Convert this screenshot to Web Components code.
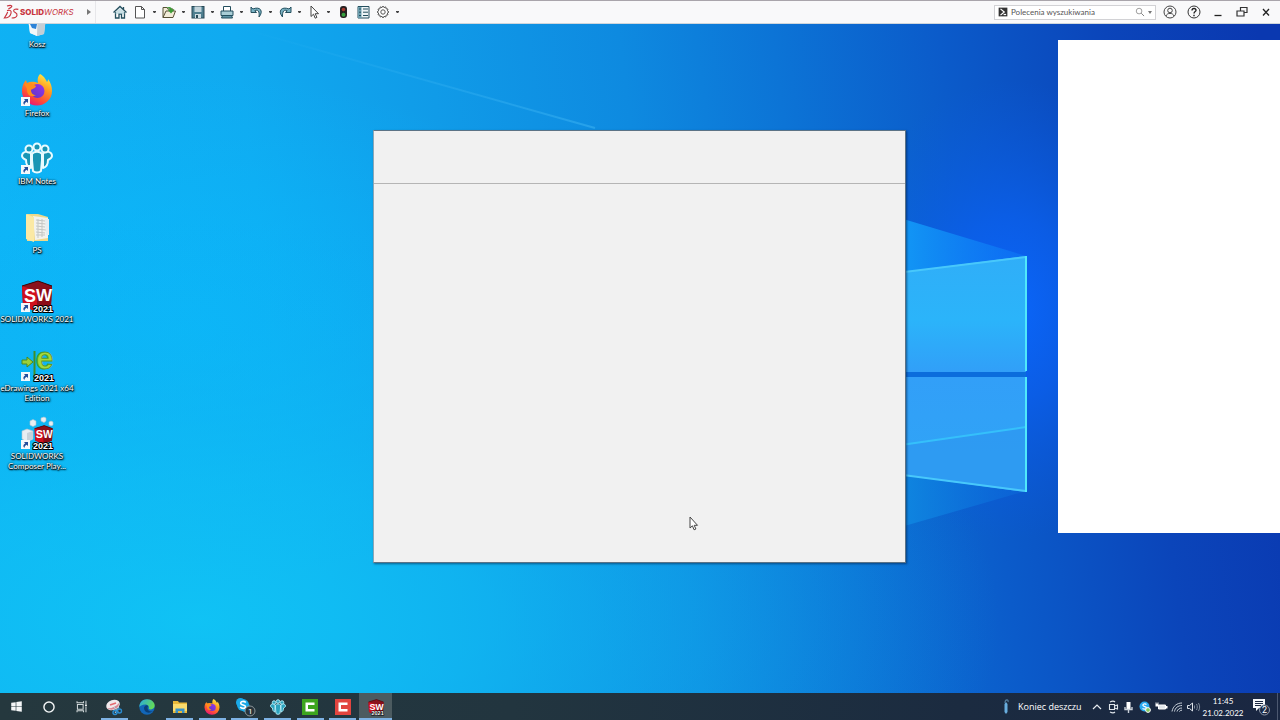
<!DOCTYPE html>
<html lang="pl">
<head>
<meta charset="utf-8">
<title>SOLIDWORKS</title>
<style>
  html, body { margin: 0; height: 100%; }
  body { font-family: "Open Sans", "Noto Sans", sans-serif; font-size: 9px; color: #222; overflow: hidden; }
</style>
</head>
<body>
<sw-screen>
  <sw-titlebar slot="top">
    <sw-tool icon="home" label="Strona główna"></sw-tool>
    <sw-tool icon="new" label="Nowy" menu></sw-tool>
    <sw-tool icon="open" label="Otwórz" menu></sw-tool>
    <sw-tool icon="save" label="Zapisz" menu></sw-tool>
    <sw-tool icon="print" label="Drukuj" menu></sw-tool>
    <sw-tool icon="undo" label="Cofnij" menu></sw-tool>
    <sw-tool icon="redo" label="Ponów" menu></sw-tool>
    <sw-tool icon="select" label="Wybierz" menu></sw-tool>
    <sw-tool icon="rebuild" label="Przebuduj"></sw-tool>
    <sw-tool icon="props" label="Właściwości"></sw-tool>
    <sw-tool icon="gear" label="Opcje" menu></sw-tool>
  </sw-titlebar>

  <desk-icon icon="bin">Kosz</desk-icon>
  <desk-icon icon="firefox" shortcut>Firefox</desk-icon>
  <desk-icon icon="notes" shortcut>IBM Notes</desk-icon>
  <desk-icon icon="folder">PS</desk-icon>
  <desk-icon icon="sw" shortcut>SOLIDWORKS 2021</desk-icon>
  <desk-icon icon="edrawings" shortcut>eDrawings 2021 x64 Edition</desk-icon>
  <desk-icon icon="composer" shortcut>SOLIDWORKS Composer Play...</desk-icon>

  <sw-dialog slot="windows"></sw-dialog>
  <sw-pane slot="windows"></sw-pane>

  <win-taskbar slot="bottom">
    <task-button icon="windows" label="Start"></task-button>
    <task-button icon="cortana" label="Cortana"></task-button>
    <task-button icon="taskview" label="Widok zadań"></task-button>
    <task-button icon="snip" label="Wycinanie" running></task-button>
    <task-button icon="edge" label="Edge"></task-button>
    <task-button icon="explorer" label="Eksplorator" running></task-button>
    <task-button icon="firefox" label="Firefox" running></task-button>
    <task-button icon="skype" label="Skype" running></task-button>
    <task-button icon="notesmall" label="IBM Notes" running></task-button>
    <task-button icon="camgreen" label="Camtasia" running></task-button>
    <task-button icon="camred" label="Rejestrator" running></task-button>
    <task-button icon="swsmall" label="SOLIDWORKS" running active></task-button>
  </win-taskbar>
</sw-screen>

<script>
const tealFill = '#a9cdd6', teal = '#244f5e';
const swCube = `
  <path d="M1 6 17 1l14 5-1 20-14 6L2 26z" fill="#8d0c18"/>
  <path d="M1 6 17 1l14 5-15 5z" fill="#8a121c"/>
  <path d="M1 6l15 5v21L2 26z" fill="#d0101d"/><path d="M16 11l15-5-1 20-14 6z" fill="#8c0c18"/>
  <path d="M1 6 17 1l14 5" fill="none" stroke="#3b0508" stroke-width="1"/>
  <text x="3" y="22" font-family="Liberation Sans" font-weight="700" font-size="18" fill="#fff">S</text>
  <text x="15" y="21" font-family="Liberation Sans" font-weight="700" font-size="17" fill="#fff">W</text>`;
const year = (x, y, s) => `<text x="${x}" y="${y}" font-family="Liberation Sans" font-weight="700" font-size="${s}" fill="#fff" stroke="#000" stroke-width="2" paint-order="stroke" stroke-linejoin="round">2021</text>`;
const people = (line, fill) => `
  <g fill="${fill}" stroke="${line}" stroke-width="2" stroke-linejoin="round">
  <path d="M1 14c0-5 8-6 9-2v14c-4-1-5-4-5-8-2-1-4-2-4-4zM31 14c0-5-8-6-9-2v14c4-1 5-4 5-8 2-1 4-2 4-4z"/>
  <path d="M11 12c2-3 8-3 10 0v6l-1 11c-2 2-6 2-8 0l-1-11z"/>
  <circle cx="8" cy="7" r="3.500"/><circle cx="24" cy="7" r="3.500"/><circle cx="16" cy="5" r="3.500"/></g>`;

const ICONS = {
  home: [16, `<path d="M1.500 8.500 8 2.500l6.500 6M3.500 8v6h3.500v-4h2.500v4h3V8M11.500 3v2.500" fill="none" stroke="${teal}" stroke-width="1.300"/><path d="M3.500 8 8 4l4.500 4v2h-9z" fill="${tealFill}" opacity=".6"/>`],
  new: [16, `<path d="M3.500 2.500h6l3 3v8.500h-9zM9.500 2.500v3h3" fill="#fff" stroke="#555" />`],
  open: [16, `<path d="M2 13.500V3.500h4l1 1.500h5v2M2 13.500l3-6.500h9.500l-2.500 6.500z" fill="#f2ecd8" stroke="#554f35"/><path d="M5 4c3-2 6-1 6 1.500h2.500L10 9.500 6.500 5.500H9C8.500 4 7 3.800 5 4z" fill="#3c9b35"/>`],
  save: [16, `<rect x="2" y="2.500" width="12" height="11.500" fill="#4f7f90" stroke="#284956"/><path d="M4.500 2.500h7V8h-7z" fill="#c3d5dc"/><path d="M5 10h6v4H5z" fill="#cfdde2"/><path d="M6 11h2v3H6z" fill="#284956"/>`],
  print: [16, `<path d="M4.500 7V2.500h7V7" fill="#fff" stroke="${teal}"/><path d="M2 7h12v4.500H2z" fill="${tealFill}" stroke="${teal}"/><path d="M3.500 11.500h9l1 2.500h-11z" fill="#5f95a6" stroke="${teal}"/>`],
  undo: [16, `<path d="M3 3v5.500h5.500L6.800 6.700c3-1.500 5 .3 4.200 6.300 5-6 1-11-6.200-8z" fill="#7ab3c4" stroke="${teal}"/>`],
  redo: [16, `<path d="M14 3v5.500H8.500l1.700-1.800c-3-1.500-5 .3-4.700 6.300-5-6-1-11 6.500-8z" fill="#7ab3c4" stroke="${teal}"/>`],
  select: [16, `<path d="M5 2v10.500l2.500-2.300 1.700 4 1.700-.8-1.700-3.700h3.300z" fill="#fff" stroke="#444" stroke-width="1"/>`],
  rebuild: [16, `<rect x="5" y="2" width="7" height="12" rx="3" fill="#262222"/><circle cx="8.500" cy="5.500" r="1.800" fill="#a83a30"/><circle cx="8.500" cy="10.800" r="2" fill="#36a13f"/>`],
  props: [16, `<path d="M3 2.500h11v11.500H3z" fill="#eef4f6" stroke="${teal}"/><path d="M3 3h3.500v11H3z" fill="#6ea0b0"/><path d="M8 5h5M8 8.200h5M8 11.500h5M4 5h2M4 8.200h2M4 11.500h2" stroke="${teal}"/>`],
  gear: [16, `<path d="M8 2l1 1.600 1.800-.7.300 1.900 1.900.3-.7 1.800L14 8l-1.700 1 .7 1.800-1.900.3-.3 1.900-1.800-.7L8 14l-1-1.700-1.800.7-.3-1.900-1.900-.3.700-1.800L2 8l1.700-1.100L3 5.100l1.900-.3.300-1.900 1.800.7z" fill="#fff" stroke="#555" stroke-width="1"/><circle cx="8" cy="8" r="2.200" fill="#fff" stroke="#555"/>`],
  user: [16, `<g fill="none" stroke="#444"><circle cx="8" cy="8" r="6"/><circle cx="8" cy="6.500" r="2.300"/><path d="M4 12c1-3.500 7-3.500 8 0"/></g>`],
  help: [16, `<circle cx="8" cy="8" r="6" fill="none" stroke="#333"/><path d="M6 6.500c0-3 4.300-2.500 4 0C9.800 7.700 8 7.500 8 9.500M8 10.700v1.500" fill="none" stroke="#222" stroke-width="1.400"/>`],
  min: [16, `<path d="M4.500 11.500h7" stroke="#222" stroke-width="1.300"/>`],
  restore: [16, `<path d="M6.500 7V3.500h6.500v5h-3M3 7h7v5H3z" fill="none" stroke="#333" stroke-width="1.200"/>`],
  close: [16, `<path d="M5 5l6 6.500M11 5l-6 6.500" stroke="#222" stroke-width="1.300"/>`],
  term: [16, `<path d="M1 1h14v14H1z" fill="#333"/><path d="M4 3l6 5-6 5" fill="none" stroke="#fff" stroke-width="2"/><path d="M9 12h4" stroke="#fff" stroke-width="2"/>`],
  loupe: [16, `<circle cx="6.500" cy="6.500" r="4.500" fill="none" stroke="#666"/><path d="M10 10l4.500 4.500" stroke="#666" stroke-width="1.300"/>`],
  ds: [24, `<g fill="none" stroke="#c8343e" stroke-width="1.700"><path d="M6 3c5-1.500 8-1 7 1-1 1.500-3 2.500-5 3.500"/><path d="M6 10c5-1.500 7 0 6 4-1 4-5 7-10 7 2-3 4-6 5-9"/><path d="M23 8c-4-1-7 0-7 2 0 3 6 3 5 7-.6 3-4 4-8 4"/></g>`],

  bin: [32, `<path d="M6 6l20-2-3 25-7 2-7-3z" fill="#dfe6ea"/><path d="M6 6l11 3-1 22-7-3z" fill="#f4f7f9"/><path d="M17 9l9-5-3 25-7 2z" fill="#c4ced6"/><path d="M9 19l4-3 3 3-1 5-4-1z" fill="#2d83d8"/>`],
  firefox: [32, `<defs><linearGradient id="f1" x1=".8" y1="0" x2=".3" y2="1"><stop offset="0" stop-color="#fff04a"/><stop offset=".4" stop-color="#ff9a1f"/><stop offset=".75" stop-color="#ff4a38"/><stop offset="1" stop-color="#e5137d"/></linearGradient><linearGradient id="f2" x1="0" y1="1" x2="1" y2="0"><stop offset="0" stop-color="#5b36c9"/><stop offset="1" stop-color="#9a35e8"/></linearGradient></defs><path d="M19 0c5 3 6 6 7 8 1-1 1-2 1-3 3 4 4 8 4 12a15 14.500 0 0 1-30 0c0-4 1-8 4-11l1 3c4-2 8-1 11 0-1-4 0-7 2-9z" fill="url(#f1)"/><circle cx="16.500" cy="17" r="7" fill="url(#f2)"/><path d="M3 10c5-2 9 0 12 2 0 2-4 3-5 4 0 3 2 5 5 5-5 3-9 0-9-5 0-3-2-4-3-6z" fill="#ff8c1c"/>`],
  notes: [32, people('#e9fbff', '#1996b5')],
  notesmall: [32, people('#aee9f5', '#2ba3bd')],
  folder: [32, `<path d="M6 3h11l10 3v24H6z" fill="#efd98a"/><path d="M12 5l15 2v20l-13 2z" fill="#f2f2ee"/><path d="M15 9l9 1M15 12l10 1M15 15l9 1M15 18l10 1M15 21l9 1M15 24l9 0M17 8v19M21 8v18" stroke="#c3c6c4"/><path d="M5 3l8 3v25l-8-3z" fill="#fbe9a4"/><path d="M24 8h4v16h-3z" fill="#e5edf0"/>`],
  sw: [32, swCube + year(12, 32, 9)],
  swsmall: [32, swCube + year(7, 32, 11)],
  edrawings: [32, `<path d="M1 11h5V8l6 5-6 5v-3H1z" fill="#9bd03a" stroke="#4f8a1c"/><path d="M13.500 2v28" stroke="#3f8f2a" stroke-width="2"/><text x="15" y="20" font-family="Liberation Sans" font-weight="700" font-size="31" fill="#a3d93b" stroke="#5a9b26" stroke-width="1">e</text>` + year(13, 32, 9)],
  composer: [32, `<g fill="#e8eef2" stroke="#b4c3cc" stroke-width=".6"><path d="M9 4l3-1.500 3 1.500v4l-3 1.500L9 8zM20 1l3-1 2 1v3l-2 1.500L20 4zM28 5l2-1 2 1v3l-2 1-2-1zM1 14l5-2 6 2v8l-6 3-5-3z"/></g><path d="M6 16v9l6-3v-8z" fill="#c7d2da"/><g transform="translate(13 8) scale(.6)">${swCube}</g>` + year(12, 32, 9)],

  windows: [16, `<path d="M1.500 3.500 7 2.700v4.900H1.500zM7.800 2.600 14.500 1.600v6H7.800zM1.500 8.400H7v4.900l-5.500-.8zM7.800 8.400h6.700v6l-6.700-1z" fill="#f5f7f8"/>`],
  cortana: [16, `<circle cx="8" cy="8" r="5.800" fill="none" stroke="#f5f7f8" stroke-width="1.600"/>`],
  taskview: [16, `<path d="M3 5.500h7v6H3zM2.500 1.500v2h8v-2M2.500 15v-1.800h8V15M13.500 1v4M13.500 8v7" fill="none" stroke="#cfd6d8" stroke-width="1.300"/><circle cx="13.500" cy="6.500" r="1.200" fill="#fff"/>`],
  snip: [16, `<ellipse cx="7" cy="6" rx="7" ry="5" fill="#f1e9ec" transform="rotate(-18 7 6)"/><path d="M1 9c3 1 9-1 12-5 1 5-8 9-12 5z" fill="#d88894"/><path d="M4 6l6-2" stroke="#e5696f" stroke-width="1.500"/><path d="M8 8l5 6M13 8l-4 6" stroke="#b5d5ea"/><circle cx="9" cy="13.500" r="2" fill="none" stroke="#2a8bd0" stroke-width="1.400"/><circle cx="13.500" cy="12" r="2" fill="none" stroke="#2a8bd0" stroke-width="1.400"/>`],
  edge: [16, `<defs><linearGradient id="e1" x1="0" y1="0" x2="1" y2=".4"><stop offset="0" stop-color="#28a9e0"/><stop offset="1" stop-color="#62d95b"/></linearGradient></defs><circle cx="8" cy="8" r="7.700" fill="#1266b8"/><path d="M.3 8C.5 3 4 .3 8 .3c5 0 8 3.500 7.700 6.700-.3 3-4 4-6 3 1-2-.7-4.500-3.500-4.500C3 5.500 1 7 .3 8z" fill="url(#e1)"/><path d="M5 9c0 4 4 6.500 9.500 3-3 1.500-6 0-6-3 0-1 .3-1.500 1-2-2-2-4.500 0-4.500 2z" fill="#0b3f78"/>`],
  explorer: [16, `<path d="M1 2h5l1 1.500h8V14H1z" fill="#e9b93a"/><path d="M1 5h14v7H1z" fill="#fbdc6d"/><path d="M3.500 14V9.500h9V14h-2.500v-2H6v2z" fill="#3a93c9"/>`],
  skype: [20, `<rect x="1" y="1" width="9" height="9" rx="4.500" fill="#1aa9e8"/><rect x="6" y="6" width="9" height="9" rx="4.500" fill="#1aa9e8"/><circle cx="8" cy="8" r="6" fill="#1aa9e8"/><path d="M10.800 5.500C9 3.700 5.500 4.300 5.700 6.300 6 8.500 10.500 7.500 10.500 9.700c0 2-3.700 2.300-5.300.3" fill="none" stroke="#fff" stroke-width="1.600"/><circle cx="15" cy="14" r="5" fill="#27343b" stroke="#8b9599"/><text x="13" y="17" font-family="Roboto" font-size="8" fill="#fff">1</text>`],
  camgreen: [16, `<path d="M0 0h16v16H0z" fill="#3da51f"/><path d="M12.500 3.500h-9v9h9v-2.500H6V6h6.500z" fill="#fff"/>`],
  camred: [16, `<path d="M0 0h16v16H0z" fill="#e2443f"/><path d="M12.500 3.500h-9v9h9v-2.500H6V6h6.500z" fill="#fff"/>`],

  rain: [16, `<path d="M6.500 5 8 3l1.500 2v8L8 15l-1.500-2z" fill="#69aede"/><path d="M7 4c0-4 4-4 3-1" fill="none" stroke="#547d9c" stroke-width="1.200"/>`],
  chevron: [16, `<path d="M4 10l4-4 4 4" fill="none" stroke="#e8ecf0" stroke-width="1.200"/>`],
  cam: [16, `<path d="M4.500 5.500h5v5h-5zM9.500 7l3-1v4l-3-1M5 3c2-1 4-1 5 0M5 13c2 1 4 1 5 0" fill="none" stroke="#dde3e9" stroke-width="1.100"/>`],
  mic: [16, `<path d="M5.500 3h4v7h-4z" fill="#fff"/><path d="M4 8v2.500h7V8M7.500 11v3" fill="none" stroke="#c9d0d8" stroke-width="1.400"/>`],
  skypetray: [16, `<circle cx="7.500" cy="7.500" r="5" fill="#29aaf0"/><path d="M9.500 5.500C8 4.300 5.500 5 6 6.500c.5 1.400 3.500 1 3.500 2.500S7 10.500 5.500 9.500" fill="none" stroke="#fff" stroke-width="1.200"/><circle cx="11" cy="11" r="2.400" fill="#82c65b" stroke="#fff"/>`],
  battery: [16, `<path d="M5.500 6h7v4h-7z" fill="#dfe5ea" stroke="#fff"/><path d="M13 7h1.500v2.500h-1.500zM2.500 4.500h3v3h-3z" fill="#fff"/><path d="M3 4.500v-1M5 4.500v-1" stroke="#fff"/>`],
  wifi: [16, `<g fill="none" stroke="#c8d0d9" stroke-width="1"><path d="M3 12.500C4 7 8 4 13 4M5.500 12.500C6 9 9 6.500 13 6.500M8 12.500C8.500 10.500 10.500 9 13 9M10.500 12.500c.3-.7 1-1.200 2.500-1.300"/></g>`],
  sound: [16, `<path d="M2.500 6.500h2l3-2.500v8l-3-2.500h-2z" fill="none" stroke="#dde3e9"/><path d="M9.500 6.500v3M11.500 5c1 2 1 4 0 6M13.500 4c1.500 3 1.500 5 0 8" fill="none" stroke="#7d8998"/>`],
  notify: [20, `<path d="M2 2h12v9H8l-3 3v-3H2z" fill="#f5f7fa"/><path d="M4 4.500h8M4 6.500h8M4 8.500h6" stroke="#1a2742"/><circle cx="13.500" cy="13" r="5" fill="#1d2a45" stroke="#8d97a8"/><text x="11" y="16" font-family="Roboto" font-size="9" fill="#fff">2</text>`]
};
const svg = (name, size) => {
  const [box, body] = ICONS[name];
  return `<svg width="${size}" height="${size}" viewBox="0 0 ${box} ${box}" aria-hidden="true">${body}</svg>`;
};
const base = `*{box-sizing:border-box} :host{box-sizing:border-box} svg{display:block;flex:none;overflow:visible} button{font:inherit;color:inherit;background:none;border:0;padding:0;margin:0}`;

class Base extends HTMLElement {
  connectedCallback() {
    if (!this.shadowRoot) {
      this.attachShadow({ mode: 'open' }).innerHTML = `<style>${base}${this.css()}</style>${this.html()}`;
    }
  }
}

customElements.define('sw-screen', class extends Base {
  css() { return `
    :host{display:grid;grid-template-rows:auto 1fr auto;min-height:100vh}
    main{position:relative;overflow:hidden;min-width:0}
    .icons{position:relative;display:grid;grid-template-rows:repeat(7,1fr);width:74px;height:481px;margin-top:-19px}
    win-wallpaper{position:absolute;inset:0}
    .cursor{position:absolute;left:689px;top:492px}`; }
  html() { return `<slot name="top"></slot>
    <main><win-wallpaper></win-wallpaper><div class="icons"><slot></slot></div><slot name="windows"></slot>
    <svg class="cursor" width="10" height="15" viewBox="0 0 10 15"><path d="M1 1v11l2.400-2.200 1.700 4 1.800-.8-1.700-3.700h3.300z" fill="#fff" stroke="#444"/></svg></main>
    <slot name="bottom"></slot>`; }
});

customElements.define('win-wallpaper', class extends Base {
  css() { return `:host{display:block;overflow:hidden} svg{width:100%;height:100%}`; }
  html() { return `<svg viewBox="0 24 1280 669" preserveAspectRatio="none">
    <defs>
      <linearGradient id="sky" gradientUnits="userSpaceOnUse" x1="0" y1="200" x2="1260" y2="40">
        <stop offset="0" stop-color="#0fb2f4"/><stop offset=".2" stop-color="#10aaf0"/><stop offset=".35" stop-color="#109be8"/><stop offset=".5" stop-color="#0e8ae0"/>
        <stop offset=".62" stop-color="#0c74d6"/><stop offset=".75" stop-color="#0b5bca"/><stop offset=".88" stop-color="#0b45ba"/><stop offset="1" stop-color="#0a38b0"/></linearGradient>
      <radialGradient id="cyan" gradientUnits="userSpaceOnUse" cx="0" cy="0" r="1" gradientTransform="translate(200 620) scale(800 400)">
        <stop offset="0" stop-color="#10c6f5" stop-opacity=".85"/><stop offset=".35" stop-color="#10c0f4" stop-opacity=".6"/><stop offset="1" stop-color="#10a8ec" stop-opacity="0"/></radialGradient>
      <radialGradient id="left" gradientUnits="userSpaceOnUse" cx="0" cy="0" r="1" gradientTransform="translate(180 330) scale(440 260)">
        <stop offset="0" stop-color="#0abafc" stop-opacity=".8"/><stop offset="1" stop-color="#0abafc" stop-opacity="0"/></radialGradient>
      <radialGradient id="glow" gradientUnits="userSpaceOnUse" cx="0" cy="0" r="1" gradientTransform="translate(1010 310) scale(170 230)">
        <stop offset="0" stop-color="#0a66fa"/><stop offset=".4" stop-color="#0b60f0" stop-opacity=".75"/><stop offset="1" stop-color="#0b5ae0" stop-opacity="0"/></radialGradient>
      <linearGradient id="pane" x1="0" y1="0" x2="0" y2="1"><stop offset="0" stop-color="#30aef8"/><stop offset=".55" stop-color="#2bb4fa"/><stop offset="1" stop-color="#319ff8"/></linearGradient>
      <linearGradient id="pane2" x1="0" y1="0" x2="0" y2="1"><stop offset="0" stop-color="#329ff8"/><stop offset="1" stop-color="#2fa5f5"/></linearGradient>
      <linearGradient id="ray" gradientUnits="userSpaceOnUse" x1="240" y1="0" x2="600" y2="0"><stop offset="0" stop-color="#4cc0f8" stop-opacity="0"/><stop offset="1" stop-color="#4cc0f8" stop-opacity=".4"/></linearGradient>
      <linearGradient id="up" gradientUnits="userSpaceOnUse" x1="900" y1="0" x2="1026" y2="0"><stop offset="0" stop-color="#1298f6"/><stop offset="1" stop-color="#1080fa" stop-opacity=".4"/></linearGradient>
      <linearGradient id="down" gradientUnits="userSpaceOnUse" x1="900" y1="0" x2="1026" y2="0"><stop offset="0" stop-color="#0f86e0"/><stop offset="1" stop-color="#0c6cdc" stop-opacity=".4"/></linearGradient>
    </defs>
    <rect y="24" width="1280" height="669" fill="url(#sky)"/>
    <rect y="24" width="1280" height="669" fill="url(#left)"/>
    <rect y="24" width="1280" height="669" fill="url(#cyan)"/>
    <rect y="24" width="1280" height="669" fill="url(#glow)"/>
    <path d="M240 28 595 128" stroke="url(#ray)" stroke-width="2"/>
    <path d="M1026 256 880 212v70z" fill="url(#up)"/>
    <path d="M1026 491 880 533v-62z" fill="url(#down)"/>
    <path d="M880 275l146-19v116H880z" fill="url(#pane)"/>
    <path d="M880 377h146v115l-146-20z" fill="url(#pane2)"/>
    <path d="M880 448l146-21v64l-146-19z" fill="#2e97f1" opacity=".7"/>
    <path d="M880 448l146-21" stroke="#35c0fb" stroke-width="2"/>
    <path d="M880 372h146v5H880z" fill="#0b6ddc"/>
    <path d="M880 275l146-18M880 472l146 19" stroke="#48c8fb" stroke-width="2" fill="none"/>
    <path d="M1026 256v115M1026 377v115" stroke="#50e8fb" stroke-width="2"/>
  </svg>`; }
});

customElements.define('sw-titlebar', class extends Base {
  css() { return `
    :host{display:flex;align-items:center;height:24px;background:#f9f9fa;border-top:1px solid #a9a5ab;border-bottom:1px solid #cfd6dc;padding-right:2px}
    .brand{display:flex;align-items:center;gap:1px;width:82px;padding-left:3px;color:#c8343e;font:8px/12px Inter,sans-serif;text-decoration:none;white-space:nowrap}
    b{font-weight:800}i{font-weight:400}
    .more{width:14px;height:22px;border-right:1px solid #e7e7ea;margin-right:14px;display:grid;place-items:center}
    nav{display:flex;flex:1}
    .search{display:flex;align-items:center;width:162px;height:15px;border:1px solid #d2d2d5;background:#fff;padding:0 3px;gap:3px;margin-right:2px}
    input{flex:1;min-width:0;border:0;padding:0;height:12px;background:none;font:8px/12px Lato,"Noto Sans",sans-serif;color:#444;outline:0}
    input::placeholder{color:#555;opacity:1}
    .win{width:24px;height:22px;display:grid;place-items:center}`; }
  html() { return `
    <a class="brand" href="#" aria-label="SOLIDWORKS">${svg('ds', 16)}<span><b>SOLID</b><i>WORKS</i></span></a>
    <button class="more" aria-label="Menu"><svg width="4" height="6" viewBox="0 0 4 6"><path d="M0 0l4 3-4 3z" fill="#777"/></svg></button>
    <nav><slot></slot></nav>
    <label class="search">${svg('term', 10)}<input type="search" placeholder="Polecenia wyszukiwania" aria-label="Polecenia wyszukiwania">${svg('loupe', 10)}<svg width="4" height="3" viewBox="0 0 4 3"><path d="M0 0h4l-2 3z" fill="#777"/></svg></label>
    ${[['user', 'Konto'], ['help', 'Pomoc'], ['min', 'Minimalizuj'], ['restore', 'Przywróć'], ['close', 'Zamknij']].map(([n, l]) => `<button class="win" aria-label="${l}">${svg(n, 16)}</button>`).join('')}`; }
});

customElements.define('sw-tool', class extends Base {
  css() { return `:host{display:flex;height:22px} button{width:20px;display:grid;place-items:center} .menu{width:9px}`; }
  html() {
    const l = this.getAttribute('label');
    return `<button aria-label="${l}">${svg(this.getAttribute('icon'), 16)}</button>` + (this.hasAttribute('menu')
      ? `<button class="menu" aria-label="${l}: menu"><svg width="3" height="2" viewBox="0 0 3 2"><path d="M0 0h3v1l-1 1H1L0 1z" fill="#444"/></svg></button>` : '');
  }
});

customElements.define('desk-icon', class extends Base {
  css() { return `
    :host{display:block;min-height:0}
    button{display:flex;flex-direction:column;align-items:center;width:100%}
    .art{position:relative;padding-bottom:2px}
    .link{position:absolute;left:0;bottom:2px}
    .label{font:8px/10px Lato,"Noto Sans",sans-serif;color:#fff;text-align:center;width:74px;text-shadow:0 1px 1px #000,1px 1px 2px #000,0 0 2px #000}`; }
  html() { return `<button><span class="art">${svg(this.getAttribute('icon'), 32)}${this.hasAttribute('shortcut')
      ? `<svg class="link" width="9" height="9" viewBox="0 0 9 9"><path d="M0 0h9v9H0z" fill="#f4f8fb"/><path d="M3 2h4v4L5.500 4.700C4 5.500 3.500 6.500 3.500 8 1.500 6 2.500 4.300 4.300 3.400z" fill="#234e9c"/></svg>` : ''}</span><span class="label"><slot></slot></span></button>`; }
});

customElements.define('sw-dialog', class extends Base {
  css() { return `
    :host{display:block;position:absolute;left:calc(50% - 267px);top:106px;width:533px;height:433px;background:#f1f1f1;border:1px solid #5c7386;border-left-color:#8ba6b6;box-shadow:1px 1px 2px rgba(0,25,60,.55)}
    header{height:53px;border-bottom:1px solid #b5b5b5}`; }
  html() { return `<header></header>`; }
});
customElements.define('sw-pane', class extends Base {
  css() { return `:host{display:block;position:absolute;right:0;top:16px;width:222px;height:493px;background:#fff}`; }
  html() { return `<slot></slot>`; }
});

customElements.define('task-button', class extends Base {
  css() { return `
    :host{display:flex;justify-content:center} :host([active]){background:#4c5b60}
    button{width:27px;height:27px;display:grid;place-items:center;border-bottom:2px solid transparent;border-top:2px solid transparent}
    :host([running]) button{border-bottom-color:#7eb2e4}
    :host([active]) button{width:100%}`; }
  html() {
    const n = this.getAttribute('icon');
    const size = { windows: 13, cortana: 14, taskview: 13, skype: 20 }[n] || 16;
    return `<button aria-label="${this.getAttribute('label')}">${svg(n, size)}</button>`;
  }
});

customElements.define('win-taskbar', class extends Base {
  css() { return `
    :host{display:flex;justify-content:space-between;height:27px;color:#fff;background:linear-gradient(90deg,#25383e,#22353f 40%,#1b2b40 75%,#1a2742)}
    .apps{display:grid;grid-template-columns:repeat(12,1fr);width:392px}
    .tray{display:flex;align-items:center}
    .weather{display:flex;align-items:center;gap:4px;font-size:9px;line-height:12px;white-space:nowrap;width:91px}
    .t{width:16px;height:27px;display:grid;place-items:center}
    .clock{width:44px;font:8px/12px Lato,"Noto Sans",sans-serif;text-align:center;white-space:nowrap}
    .note{width:32px;height:27px;display:grid;place-items:center}
    .peek{width:3px;height:27px;border-left:1px solid #4c5870}`; }
  html() { return `<div class="apps"><slot></slot></div>
    <div class="tray"><button class="weather">${svg('rain', 16)}<span>Koniec deszczu</span></button>
    ${[['chevron', 'Ukryte ikony'], ['cam', 'Kamera'], ['mic', 'Mikrofon'], ['skypetray', 'Skype'], ['battery', 'Bateria'], ['wifi', 'Sieć'], ['sound', 'Głośność']].map(([n, l]) => `<button class="t" aria-label="${l}">${svg(n, 16)}</button>`).join('')}
    <button class="clock">11:45<br>21.02.2022</button>
    <button class="note" aria-label="Powiadomienia">${svg('notify', 20)}</button>
    <button class="peek" aria-label="Pokaż pulpit"></button></div>`; }
});
</script>
</body>
</html>
